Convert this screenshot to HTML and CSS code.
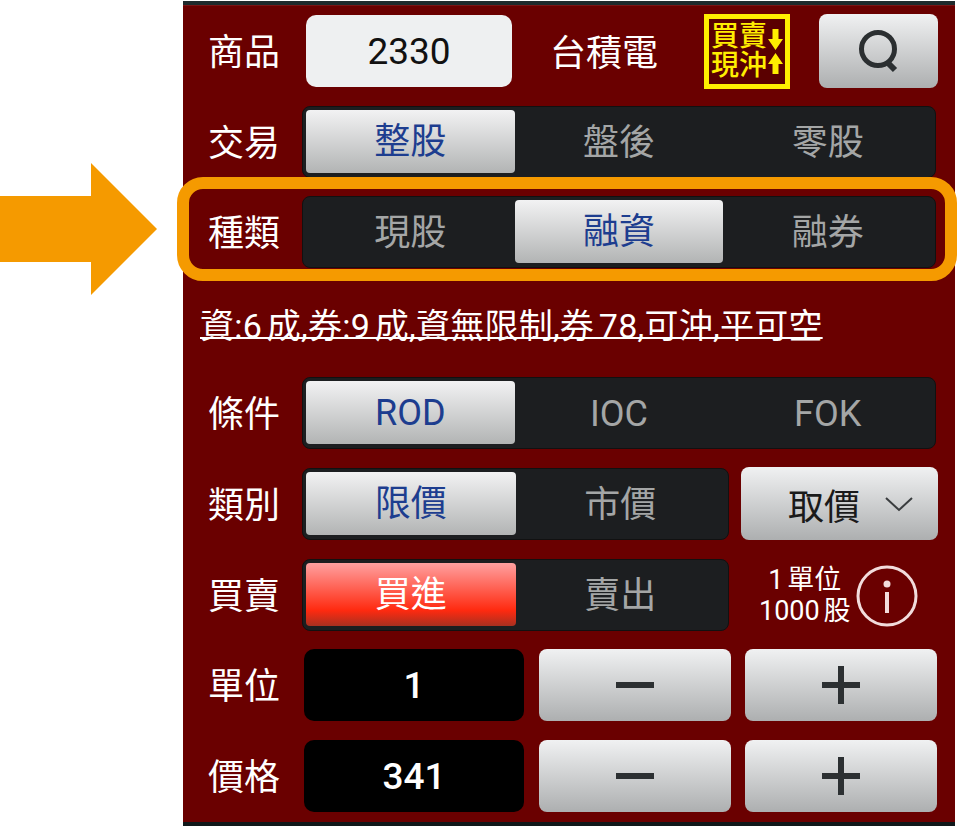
FILE: index.html
```html
<!DOCTYPE html>
<html lang="zh-Hant">

<head>
  <meta charset="UTF-8">
  <meta name="viewport" content="width=device-width, initial-scale=1.0">
  <title>下單 - 種類</title>
  <link rel="stylesheet" href="styles.css">
</head>

<body>
  <svg class="arrow" width="157" height="132" viewBox="0 0 157 132">
    <polygon points="0,33 91,33 91,0 157,66 91,132 91,99 0,99" fill="#f59a00"></polygon>
  </svg>

  <div class="panel">
    <div class="top-bar"></div>
    <div class="rows">
      <div class="row">
        <div class="label">商品</div>
        <div class="stock-input">2330</div>
        <div class="stock-name">台積電</div>
        <div class="badge">
          <div class="badge-text">買賣 現沖</div>
          <div class="badge-arrows">
            <svg width="15" height="21" viewBox="0 0 15 21"><polygon points="4.5,0 10.5,0 10.5,10 15,10 7.5,21 0,10 4.5,10" fill="#ffee00"></polygon></svg>
            <svg width="15" height="21" viewBox="0 0 15 21"><polygon points="7.5,0 15,11 10.5,11 10.5,21 4.5,21 4.5,11 0,11" fill="#ffee00"></polygon></svg>
          </div>
        </div>
        <div class="btn search-btn">
          <svg width="44" height="44" viewBox="0 0 44 44">
            <circle cx="21" cy="20" r="16.5" fill="none" stroke="#2b2f31" stroke-width="5"></circle>
            <line x1="30" y1="33" x2="38" y2="41" stroke="#2b2f31" stroke-width="6"></line>
          </svg>
        </div>
      </div>

      <div class="row">
        <div class="label">交易</div>
        <ul class="seg">
          <li class="selected">整股</li>
          <li>盤後</li>
          <li>零股</li>
        </ul>
      </div>

      <div class="row row-marked">
        <div class="label">種類</div>
        <ul class="seg">
          <li>現股</li>
          <li class="selected">融資</li>
          <li>融券</li>
        </ul>
      </div>

      <div class="row note-row">
        <div class="note">資:6 成,券:9 成,資無限制,券 78,可沖,平可空</div>
      </div>

      <div class="row">
        <div class="label">條件</div>
        <ul class="seg">
          <li class="selected">ROD</li>
          <li>IOC</li>
          <li>FOK</li>
        </ul>
      </div>

      <div class="row">
        <div class="label">類別</div>
        <ul class="seg seg-short">
          <li class="selected">限價</li>
          <li>市價</li>
        </ul>
        <div class="btn price-btn">
          <span>取價</span>
          <svg width="28" height="16" viewBox="0 0 28 16">
            <polyline points="1,2 14,14 27,2" fill="none" stroke="#3a3d3f" stroke-width="2"></polyline>
          </svg>
        </div>
      </div>

      <div class="row">
        <div class="label">買賣</div>
        <ul class="seg seg-short">
          <li class="selected buy">買進</li>
          <li>賣出</li>
        </ul>
        <div class="unit-info">
          <div class="unit-text">
            <div>1 單位</div>
            <div>1000 股</div>
          </div>
          <svg width="62" height="62" viewBox="0 0 62 62">
            <circle cx="31" cy="31" r="29" fill="none" stroke="#f2dcdc" stroke-width="3"></circle>
            <circle cx="31" cy="19" r="3.5" fill="#f2dcdc"></circle>
            <rect x="29" y="27" width="4" height="21" fill="#f2dcdc"></rect>
          </svg>
        </div>
      </div>

      <div class="row">
        <div class="label">單位</div>
        <div class="value">1</div>
        <div class="btn step-btn"><div class="minus"></div></div>
        <div class="btn step-btn"><div class="plus"></div></div>
      </div>

      <div class="row">
        <div class="label">價格</div>
        <div class="value">341</div>
        <div class="btn step-btn"><div class="minus"></div></div>
        <div class="btn step-btn"><div class="plus"></div></div>
      </div>
    </div>
    <div class="bottom-bar"></div>
  </div>
</body>

</html>
```

FILE: styles.css
```css
* {
  padding: 0;
  margin: 0;
  box-sizing: border-box;
}

body {
  background: #fff;
  font-family: Roboto, "Noto Sans CJK TC", sans-serif;
  overflow: hidden;
}

.arrow {
  position: absolute;
  left: 0;
  top: 163px;
}

.panel {
  display: flex;
  flex-direction: column;
  width: 772px;
  height: 825px;
  margin-top: 1px;
  margin-left: 183px;
  background: #6a0000;
}

.top-bar {
  height: 5px;
  background: #1f2a2c;
  border-bottom: 1px solid #7a1414;
}

.rows {
  display: flex;
  flex-direction: column;
  gap: 18.6px;
  padding-top: 9px;
}

.bottom-bar {
  height: 4px;
  margin-top: auto;
  background: #10181a;
}

.row {
  position: relative;
  display: flex;
  align-items: center;
  height: 72px;
  padding-left: 25px;
}

.row-marked::after {
  content: "";
  position: absolute;
  left: -6px;
  right: -2px;
  top: -19px;
  bottom: -13px;
  border: 12px solid #f59a00;
  border-radius: 26px;
}

.label {
  width: 94px;
  flex-shrink: 0;
  padding-bottom: 4px;
  font-size: 36px;
  color: #fff;
}

.stock-input {
  width: 206px;
  height: 72px;
  margin-left: 4px;
  border-radius: 10px;
  background: #eef0f1;
  color: #111;
  font-size: 37px;
  line-height: 74px;
  text-align: center;
}

.stock-name {
  margin-left: 38px;
  padding-bottom: 3px;
  font-size: 36px;
  color: #fff;
}

.badge {
  display: flex;
  align-items: center;
  width: 86px;
  height: 75px;
  margin-left: 46px;
  padding-left: 2px;
  background: #5a0000;
  border: 5px solid #ffee00;
}

.badge-text {
  width: 56px;
  font-size: 28px;
  font-weight: 500;
  line-height: 29px;
  color: #ffee00;
}

.badge-arrows {
  display: flex;
  flex-direction: column;
  gap: 3px;
  margin-left: 1px;
}

.btn {
  display: flex;
  align-items: center;
  justify-content: center;
  border-radius: 8px;
  background: linear-gradient(#f0f1f2, #adafb0);
}

.search-btn {
  width: 119px;
  height: 74px;
  margin-left: 29px;
}

.seg {
  display: flex;
  width: 634px;
  height: 72px;
  padding: 3px 3px 4px;
  list-style: none;
  background: #1c1e20;
  border: 1px solid #111;
  border-radius: 8px;
}

.seg-short {
  width: 427px;
}

.seg li {
  flex: 1;
  border-radius: 4px;
  color: #a4a6a6;
  font-size: 36px;
  line-height: 67px;
  text-align: center;
}

.seg .selected {
  background: linear-gradient(#f2f2f3, #b2b4b4);
  color: #1d3d8f;
  line-height: 64px;
}

.seg .buy {
  background: linear-gradient(#ffa0a0, #ff2a10 75%, #a83020);
  color: #fff;
}

.note-row {
  padding-left: 17px;
  padding-top: 2px;
}

.note {
  font-size: 34px;
  color: #fff;
  white-space: nowrap;
  text-decoration: underline;
  text-decoration-thickness: 2px;
  text-decoration-skip-ink: none;
  text-underline-offset: -1px;
  word-spacing: -4px;
  letter-spacing: 0.25px;
}

.price-btn {
  gap: 25px;
  width: 197px;
  height: 73px;
  margin-left: 12px;
  padding-left: 22px;
  color: #1a1a1a;
  font-size: 36px;
}

.unit-info {
  display: flex;
  align-items: center;
  gap: 6px;
  margin-left: 30px;
  padding-top: 3px;
  color: #fff;
}

.unit-text {
  font-size: 27px;
  line-height: 31px;
  text-align: center;
  word-spacing: -3px;
}

.value {
  width: 220px;
  height: 72px;
  margin-left: 2px;
  border-radius: 10px;
  background: #000;
  color: #fff;
  font-size: 37px;
  font-weight: 500;
  line-height: 74px;
  text-align: center;
}

.step-btn {
  width: 192px;
  height: 72px;
  margin-left: 15px;
}

.step-btn + .step-btn {
  margin-left: 14px;
}

.minus {
  width: 38px;
  height: 6px;
  background: #2c3032;
}

.plus {
  width: 38px;
  height: 38px;
  background:
    linear-gradient(#2c3032, #2c3032) center / 38px 6px no-repeat,
    linear-gradient(#2c3032, #2c3032) center / 6px 38px no-repeat;
}
```
